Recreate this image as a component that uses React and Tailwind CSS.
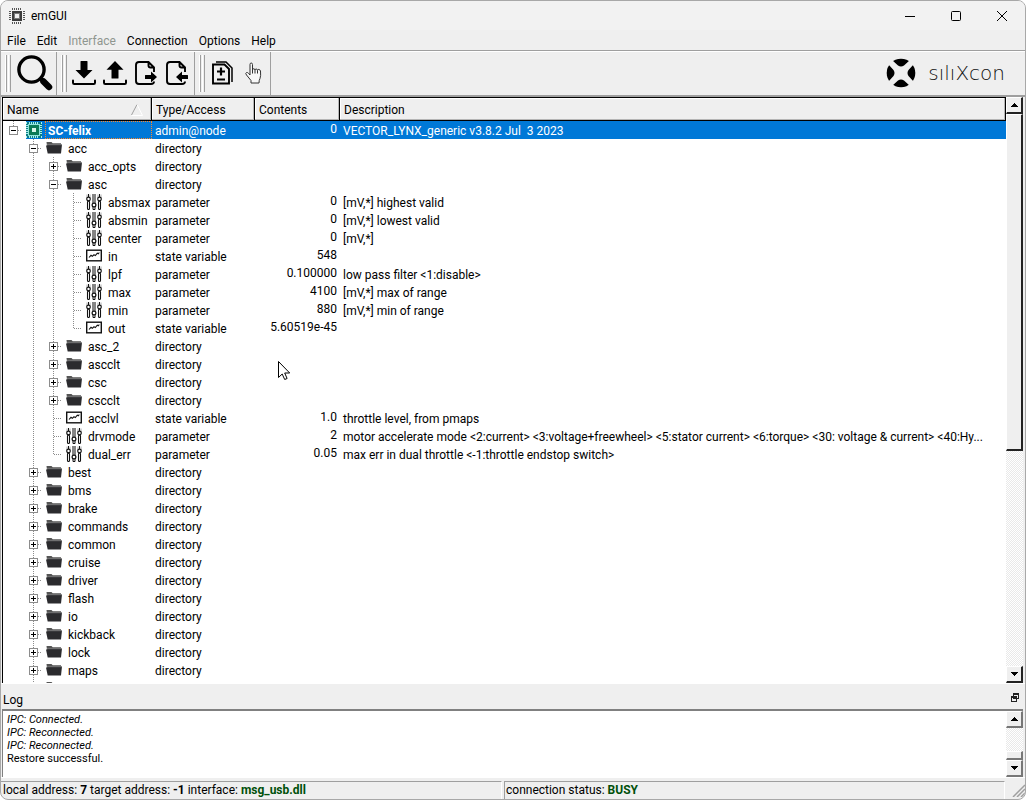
import React, { useState } from 'react';

const dir = (name, children) => ({ name, type: 'directory', children: children || [] });
const param = (name, value, desc) => ({ name, type: 'parameter', value, desc });
const state = (name, value, desc) => ({ name, type: 'state variable', value, desc });

const NODE = {
    name: 'SC-felix',
    type: 'admin@node',
    value: '0',
    desc: 'VECTOR_LYNX_generic v3.8.2 Jul  3 2023',
    children: [
        dir('acc', [
            dir('acc_opts'),
            dir('asc', [
                param('absmax', '0', '[mV,*] highest valid'),
                param('absmin', '0', '[mV,*] lowest valid'),
                param('center', '0', '[mV,*]'),
                state('in', '548'),
                param('lpf', '0.100000', 'low pass filter <1:disable>'),
                param('max', '4100', '[mV,*] max of range'),
                param('min', '880', '[mV,*] min of range'),
                state('out', '5.60519e-45'),
            ]),
            dir('asc_2'),
            dir('ascclt'),
            dir('csc'),
            dir('cscclt'),
            state('acclvl', '1.0', 'throttle level, from pmaps'),
            param('drvmode', '2', 'motor accelerate mode <2:current> <3:voltage+freewheel> <5:stator current> <6:torque> <30: voltage & current> <40:Hy...'),
            param('dual_err', '0.05', 'max err in dual throttle <-1:throttle endstop switch>'),
        ]),
        ...['best', 'bms', 'brake', 'commands', 'common', 'cruise', 'driver', 'flash', 'io', 'kickback', 'lock', 'maps', 'motor'].map((n) => dir(n)),
    ],
};

// Flattens the open part of the tree; lines[] tells which ancestors still have siblings below
const flatten = (node, open, path = '', lines = [], last = true) => {
    const key = `${path}/${node.name}`;
    const isOpen = open.includes(key);
    const rows = [{ ...node, key, lines, last, isOpen }];
    if (isOpen) {
        node.children.forEach((child, i) => {
            rows.push(...flatten(child, open, key, [...lines, !last], i === node.children.length - 1));
        });
    }
    return rows;
};

/* ---------- Icons ---------- */

const ChipIcon = () => (
    <svg viewBox="0 0 16 16" className="size-4" shapeRendering="crispEdges" aria-hidden="true">
        <path d="M3.5 0v16M5.5 0v16M7.5 0v16M9.5 0v16M11.5 0v16M0 3.5h16M0 5.5h16M0 7.5h16M0 9.5h16M0 11.5h16" stroke="#555" strokeDasharray="2 12" />
        <rect x="3" y="3" width="10" height="10" fill="#3c3c3c" />
        <rect x="5" y="5" width="6" height="6" fill="#777" />
        <rect x="6" y="6" width="4" height="4" fill="#efefef" />
    </svg>
);

const NodeIcon = () => (
    <svg viewBox="0 0 16 16" className="size-4" shapeRendering="crispEdges" aria-hidden="true">
        <rect width="16" height="16" fill="#0e7f86" />
        <path d="M0.5 0v16M15.5 0v16M3.5 0v16M5.5 0v16M7.5 0v16M9.5 0v16M11.5 0v16M0 3.5h16M0 5.5h16M0 7.5h16M0 9.5h16M0 11.5h16" stroke="#a9f0ee" strokeDasharray="2 12" />
        <rect x="2" y="2" width="12" height="12" fill="#8fe3dc" />
        <rect x="3" y="3" width="10" height="10" fill="#0b7a55" />
        <rect x="6" y="6" width="4" height="4" fill="#d8f5ea" />
    </svg>
);

const FolderIcon = () => (
    <svg viewBox="0 0 16 16" className="size-4" aria-hidden="true">
        <path d="M0.5 2h5l1.2 1.3h8.3v3H1z" fill="#555" />
        <path d="M1.5 4.5h14.5l-1 9H1.7L0 5.5h1.5z" fill="#2b2b2e" />
        <path d="M1 4.7h15" stroke="#8a8a8a" strokeWidth="0.8" />
    </svg>
);

const SlidersIcon = () => (
    <svg viewBox="0 0 16 16" className="size-4" fill="none" stroke="#111" aria-hidden="true">
        <rect x="6" y="0" width="4" height="10" fill="#858585" stroke="none" />
        <path d="M1 0.500v3M4 0.500v3M12 0.500v3M15 0.500v3" stroke="#999" strokeWidth="0.8" />
        <path d="M2.500 0v3M13.500 0v3" />
        <circle cx="2.500" cy="5" r="1.800" strokeWidth="1.200" />
        <circle cx="13.500" cy="5" r="1.800" strokeWidth="1.200" />
        <rect x="1.500" y="7" width="2" height="8.500" rx="1" strokeWidth="1.100" />
        <rect x="12.500" y="7" width="2" height="8.500" rx="1" strokeWidth="1.100" />
        <circle cx="8" cy="11" r="1.900" fill="#fff" strokeWidth="1.200" />
        <path d="M7 13v2.500h2V13" />
    </svg>
);

const GraphIcon = () => (
    <svg viewBox="0 0 16 16" className="size-4" fill="none" stroke="#111" aria-hidden="true">
        <rect x="0.7" y="2.200" width="14.600" height="10.600" strokeWidth="1.400" />
        <path d="M3 9.500l2-2.200 1.300 1L8 6.800l1.300.8 2-2.400 1 .6L13.300 4.500" strokeWidth="1.100" />
    </svg>
);

const RowIcon = ({ row }) => {
    if (row.type === 'directory') return <FolderIcon />;
    if (row.type === 'parameter') return <SlidersIcon />;
    if (row.type === 'state variable') return <GraphIcon />;
    return <NodeIcon />;
};

const SearchIcon = () => (
    <svg viewBox="0 0 36 36" className="size-9" fill="none" stroke="#000" aria-hidden="true">
        <circle cx="14.5" cy="14.5" r="12.6" strokeWidth="3.4" />
        <path d="M24 24l2.5 2.5" strokeWidth="4" />
        <path d="M26.5 26.5l5.5 5.5" strokeWidth="6.5" strokeLinecap="round" />
    </svg>
);

const DownloadIcon = () => (
    <svg viewBox="0 0 24 24" className="size-6" aria-hidden="true">
        <path d="M8.5 0.5q0-.5.5-.5h6q.5 0 .5.5V9h5L12 17.5 3.5 9h5z" />
        <path d="M1 19.5v2.2q0 1.3 1.3 1.3h19.4q1.3 0 1.3-1.3v-2.2" fill="none" stroke="#000" strokeWidth="2" strokeLinecap="round" />
    </svg>
);

const UploadIcon = () => (
    <svg viewBox="0 0 24 24" className="size-6" aria-hidden="true">
        <path d="M12 0l8.5 8.8h-5V17q0 .6-.6.6H9.1q-.6 0-.6-.6V8.8h-5z" />
        <path d="M1 19.5v2.2q0 1.3 1.3 1.3h19.4q1.3 0 1.3-1.3v-2.2" fill="none" stroke="#000" strokeWidth="2" strokeLinecap="round" />
    </svg>
);

const FileArrowIcon = ({ incoming }) => (
    <svg viewBox="0 0 24 24" className="size-6" aria-hidden="true">
        <path d="M20 11V6.5L14.5 1H5Q2 1 2 4v16q0 3 3 3h12q3 0 3-2.5M14.5 1v3.5q0 2 2 2H20" fill="none" stroke="#000" strokeWidth="1.9" />
        {incoming
            ? <path d="M11 16l6-5.500v3.500h5.500q.5 0 .5.500v3q0 .5-.5.500H17v3.500z" />
            : <path d="M23 16l-6-5.500v3.500h-5.500q-.5 0-.5.500v3q0 .5.500.500H17v3.500z" />}
    </svg>
);

const DiffIcon = () => (
    <svg viewBox="0 0 24 24" className="size-6" fill="none" stroke="#000" aria-hidden="true">
        <path d="M2 3.500h11.500L18 8v14.500H2z" strokeWidth="1.900" />
        <path d="M5 1h10l6 6v14" strokeWidth="1.500" />
        <path d="M10 6.500v8M6 10.500h8M6 18.500h8" strokeWidth="2.200" />
    </svg>
);

const HandIcon = () => (
    <svg viewBox="0 0 17 22" className="h-[22px] w-[17px]" fill="#f8f8f8" stroke="#333" strokeWidth="1" strokeLinejoin="round" aria-hidden="true">
        <path d="M6 21v-2.500L1.500 13Q0 11 1.500 10.500q1-.3 2 .8L5 13V2.500Q5 1 6.200 1t1.300 1.500V8q0-1.300 1.200-1.300T10 8.200q0-1.200 1.200-1.200t1.300 1.400q.2-1 1.300-1T15.500 9q.5 5-.5 7.500-1 1.500-1 4.500z" />
        <path d="M7.500 8v3.500M10 8.200v3.300M12.500 8.400v3.100" />
    </svg>
);

const LogoMark = () => (
    <svg viewBox="0 0 30 30" className="size-[30px]" aria-hidden="true">
        <circle cx="15" cy="15" r="14.300" />
        <path d="M2 6L6 2l6 5.500q3 2 6 0L24 2l4 4-5.500 6q-2 3 0 6l5.500 6-4 4-6-5.500q-3-2-6 0L6 28l-4-4 5.500-6q2-3 0-6z" fill="#efefef" />
    </svg>
);

/* ---------- Controls ---------- */

const Grip = () => (
    <div className="flex gap-px self-stretch py-[3px]" aria-hidden="true">
        <div className="w-[2px] border-r border-l border-r-[#9f9f9f] border-l-white" />
        <div className="w-[3px] border-r border-l border-r-[#9f9f9f] border-l-white" />
    </div>
);

const ToolButton = ({ label, children }) => (
    <button type="button" title={label} aria-label={label} className="flex shrink-0 items-center justify-center">
        {children}
    </button>
);

const ToolGroup = ({ children }) => (
    <div className="flex items-center border-r border-[#9f9f9f] pl-1">
        <Grip />
        {children}
    </div>
);

const ArrowButton = ({ up, dark }) => (
    <button
        type="button"
        aria-label={up ? 'Scroll up' : 'Scroll down'}
        className={`flex h-[17px] w-full shrink-0 items-center justify-center border-t border-r-2 border-b-2 border-l border-t-white border-l-white bg-[#efefef] ${dark ? 'border-r-[#222] border-b-[#222]' : 'border-r-[#777] border-b-[#777]'}`}
    >
        <svg viewBox="0 0 7 4" className="h-1 w-[7px]" shapeRendering="crispEdges" aria-hidden="true">
            <path d={up ? 'M0 4L3.5 0 7 4z' : 'M0 0L3.5 4 7 0z'} />
        </svg>
    </button>
);

const TRACK = 'flex w-[17px] shrink-0 flex-col bg-[repeating-conic-gradient(#ffffff_0_25%,#e9e9e9_0_50%)] bg-[length:2px_2px]';

const Guides = ({ row, onToggle }) => {
    const hasBox = !!row.children;
    return (
        <>
            {row.lines.map((on, i) => (
                <svg key={i} viewBox="0 0 20 18" className="h-[18px] w-5 shrink-0" aria-hidden="true">
                    {on && <path d="M10.5 0v18" stroke="#8c8c8c" strokeDasharray="1 1" />}
                </svg>
            ))}
            <button
                type="button"
                aria-label={`${row.isOpen ? 'Collapse' : 'Expand'} ${row.name}`}
                disabled={!hasBox}
                onClick={() => onToggle(row.key)}
                className="h-[18px] w-5 shrink-0"
            >
                <svg viewBox="0 0 20 18" className="h-[18px] w-5" fill="none" aria-hidden="true">
                    <path d={`M10.5 0v${row.last ? 9 : 18}`} stroke="#8c8c8c" strokeDasharray="1 1" />
                    <path d="M11 9.5h8" stroke="#8c8c8c" strokeDasharray="1 1" />
                    {hasBox && <rect x="6.5" y="5.5" width="8" height="8" fill="#fff" stroke="#8c8c8c" />}
                    {hasBox && <path d={row.isOpen ? 'M8 9.5h5' : 'M8 9.5h5M10.5 7v5'} stroke="#000" />}
                </svg>
            </button>
        </>
    );
};

const TreeRow = ({ row, selected, onSelect, onToggle }) => {
    const bg = selected ? 'bg-[#0078d7] text-white' : '';
    return (
        <tr onClick={() => onSelect(row.key)}>
            <td className="p-0">
                <div className="flex h-[18px] items-center">
                    <Guides row={row} onToggle={onToggle} />
                    <div className={`ml-[3px] flex h-[18px] min-w-0 flex-1 items-center gap-[3px] ${bg}`}>
                        <span className="shrink-0"><RowIcon row={row} /></span>
                        <span className={`h-[18px] min-w-0 flex-1 overflow-hidden border border-dotted pl-0.5 leading-[18px] ${selected ? 'border-[#ff8728]' : 'border-transparent'} ${row.lines.length === 0 ? 'font-bold' : ''}`}>
                            {row.name}
                        </span>
                    </div>
                </div>
            </td>
            <td className={`truncate p-0 pt-0.5 pl-[3px] leading-4 ${bg}`}>{row.type}</td>
            <td className={`p-0 pr-[3px] text-right align-top leading-4 ${bg}`}>{row.value}</td>
            <td className={`overflow-hidden p-0 pt-0.5 pl-[3px] leading-4 whitespace-pre ${bg}`}>{row.desc}</td>
        </tr>
    );
};

const TH = 'border-r border-b border-t border-black bg-[#efefef] p-0 pt-0.5 pl-1 text-left font-normal shadow-[inset_-1px_-1px_0_#b5b5b5,inset_1px_1px_0_#fff]';

const MENU = ['File', 'Edit', 'Interface', 'Connection', 'Options', 'Help'];

const App = () => {
    const [open, setOpen] = useState(['/SC-felix', '/SC-felix/acc', '/SC-felix/acc/asc']);
    const [selected, setSelected] = useState('/SC-felix');

    const toggle = (key) => {
        setOpen(open.includes(key) ? open.filter((k) => k !== key) : [...open, key]);
    };

    return (
        <div className="relative flex h-screen w-full flex-col overflow-hidden rounded-lg border border-[#a8a8a8] bg-[#efefef] font-['Roboto','Open_Sans',sans-serif] text-[12px] text-black">
            <header className="flex h-[29px] shrink-0 items-center bg-[#f2f2f2] pl-2">
                <ChipIcon />
                <h1 className="flex-1 pl-1.5">emGUI</h1>
                <button type="button" aria-label="Minimize" className="flex h-full w-[46px] items-center justify-center">
                    <svg viewBox="0 0 10 10" className="size-2.5" stroke="#000" aria-hidden="true"><path d="M0 5.5h10" /></svg>
                </button>
                <button type="button" aria-label="Maximize" className="flex h-full w-[46px] items-center justify-center">
                    <svg viewBox="0 0 10 10" className="size-2.5" fill="none" stroke="#000" aria-hidden="true"><rect x="0.5" y="0.5" width="9" height="9" rx="1" /></svg>
                </button>
                <button type="button" aria-label="Close" className="flex h-full w-[46px] items-center justify-center">
                    <svg viewBox="0 0 10 10" className="size-2.5" stroke="#000" aria-hidden="true"><path d="M0 0l10 10M10 0L0 10" /></svg>
                </button>
            </header>

            <nav className="flex h-5 shrink-0 items-center gap-[11px] pt-0.5 pl-1.5">
                {MENU.map((item) => (
                    <button key={item} type="button" disabled={item === 'Interface'} className="disabled:text-[#8f968f]">{item}</button>
                ))}
            </nav>

            <div className="flex h-[47px] shrink-0 border-t border-b-2 border-[#9f9f9f]">
                <div className="flex flex-1 border-t border-white">
                    <ToolGroup>
                        <div className="flex pr-[3px] pb-0.5 pl-1.5">
                            <ToolButton label="Search"><SearchIcon /></ToolButton>
                        </div>
                    </ToolGroup>
                    <ToolGroup>
                        <div className="flex gap-[7px] pr-[5px] pb-0.5 pl-[5px]">
                            <ToolButton label="Download"><DownloadIcon /></ToolButton>
                            <ToolButton label="Upload"><UploadIcon /></ToolButton>
                            <ToolButton label="Export file"><FileArrowIcon /></ToolButton>
                            <ToolButton label="Import file"><FileArrowIcon incoming /></ToolButton>
                        </div>
                    </ToolGroup>
                    <ToolGroup>
                        <div className="flex gap-2.5 pr-2 pb-0.5 pl-1.5">
                            <ToolButton label="Compare"><DiffIcon /></ToolButton>
                            <ToolButton label="Pick"><HandIcon /></ToolButton>
                        </div>
                    </ToolGroup>
                    <div className="ml-auto flex items-center gap-3 pr-5 pb-0.5">
                        <LogoMark />
                        <span className="font-['DejaVu_Sans_Light','DejaVu_Sans',sans-serif] text-[20px] font-extralight text-[#111]">sılıXcon</span>
                    </div>
                </div>
            </div>

            <main className="mr-0.5 ml-px flex min-h-0 flex-1 border-l border-black bg-white">
                <div className="min-w-0 flex-1 overflow-hidden">
                    <table className="w-full table-fixed border-separate border-spacing-0">
                        <colgroup>
                            <col className="w-[149px]" />
                            <col className="w-[103px]" />
                            <col className="w-[85px]" />
                            <col />
                        </colgroup>
                        <thead>
                            <tr className="h-6">
                                <th scope="col" className={TH}>
                                    <div className="flex items-center justify-between pr-2">
                                        Name
                                        <svg viewBox="0 0 12 12" className="size-3" fill="none" aria-hidden="true">
                                            <path d="M6 0.5L0.5 11" stroke="#a0a0a0" />
                                            <path d="M6 0.5L11.5 11.5H0.5" stroke="#fff" />
                                        </svg>
                                    </div>
                                </th>
                                <th scope="col" className={TH}>Type/Access</th>
                                <th scope="col" className={TH}>Contents</th>
                                <th scope="col" className={TH}>Description</th>
                            </tr>
                        </thead>
                        <tbody>
                            {flatten(NODE, open).map((row) => (
                                <TreeRow key={row.key} row={row} selected={row.key === selected} onSelect={setSelected} onToggle={toggle} />
                            ))}
                        </tbody>
                    </table>
                </div>
                <div className={TRACK}>
                    <ArrowButton up dark />
                    <div className="flex min-h-0 flex-1 flex-col">
                        <div className="h-[61%] border-t border-r-2 border-b-2 border-l border-t-white border-r-[#222] border-b-[#222] border-l-white bg-[#efefef]" />
                    </div>
                    <ArrowButton dark />
                </div>
            </main>

            <section className="shrink-0" aria-label="Log">
                <div className="flex h-[26px] items-center justify-between border-t border-white pt-1.5 pr-1.5 pl-0.5">
                    <h2>Log</h2>
                    <button type="button" aria-label="Float panel" className="pb-1">
                        <svg viewBox="0 0 8 9" className="h-[9px] w-2" fill="#efefef" stroke="#222" shapeRendering="crispEdges" aria-hidden="true">
                            <path d="M2.5 0.5h5v5h-5zM2.5 1.5h5M0.5 3.5h5v5h-5zM0.5 4.5h5" />
                        </svg>
                    </button>
                </div>
                <div className="mr-0.5 ml-px flex h-[68px] border-t-2 border-l border-[#808080] bg-white">
                    <div role="log" className="flex-1 pt-0.5 pl-1 text-[11px] leading-[13px]">
                        <p className="italic">IPC: Connected.</p>
                        <p className="italic">IPC: Reconnected.</p>
                        <p className="italic">IPC: Reconnected.</p>
                        <p>Restore successful.</p>
                    </div>
                    <div className={TRACK}>
                        <ArrowButton up />
                        <div className="flex flex-1 flex-col justify-end">
                            <div className="h-[9px] border-t border-r-2 border-b-2 border-l border-t-white border-r-[#777] border-b-[#777] border-l-white bg-[#efefef]" />
                        </div>
                        <ArrowButton />
                    </div>
                </div>
            </section>

            <footer className="flex h-[22px] shrink-0 gap-0.5 border-t border-white pt-[3px]">
                <div className="flex-1 overflow-hidden border-t border-r border-t-[#9f9f9f] border-r-white pl-0.5 leading-4 whitespace-nowrap">
                    local address: <b>7</b> target address: <b>-1</b> interface: <b className="text-[#00500a]">msg_usb.dll</b>
                </div>
                <div className="flex-1 border-t border-r border-l border-t-[#9f9f9f] border-r-white border-l-[#9f9f9f] pl-px leading-4">
                    connection status: <b className="text-[#00500a]">BUSY</b>
                </div>
                <svg viewBox="0 0 14 16" className="ml-1 h-4 w-[14px]" stroke="#9f9f9f" strokeWidth="1.5" aria-hidden="true">
                    <path d="M2 16L14 4M6 16l8-8M10 16l4-4" />
                </svg>
            </footer>

            {/* mouse pointer over the tree */}
            <svg viewBox="0 0 12 19" className="pointer-events-none absolute top-[360px] left-[277px] h-[19px] w-3" fill="#fff" stroke="#000" strokeLinejoin="round" aria-hidden="true">
                <path d="M0.5 0.5v16l3.7-3.5 2.5 5.5 2.4-1-2.4-5.5h5z" />
            </svg>
        </div>
    );
};

export default App;
